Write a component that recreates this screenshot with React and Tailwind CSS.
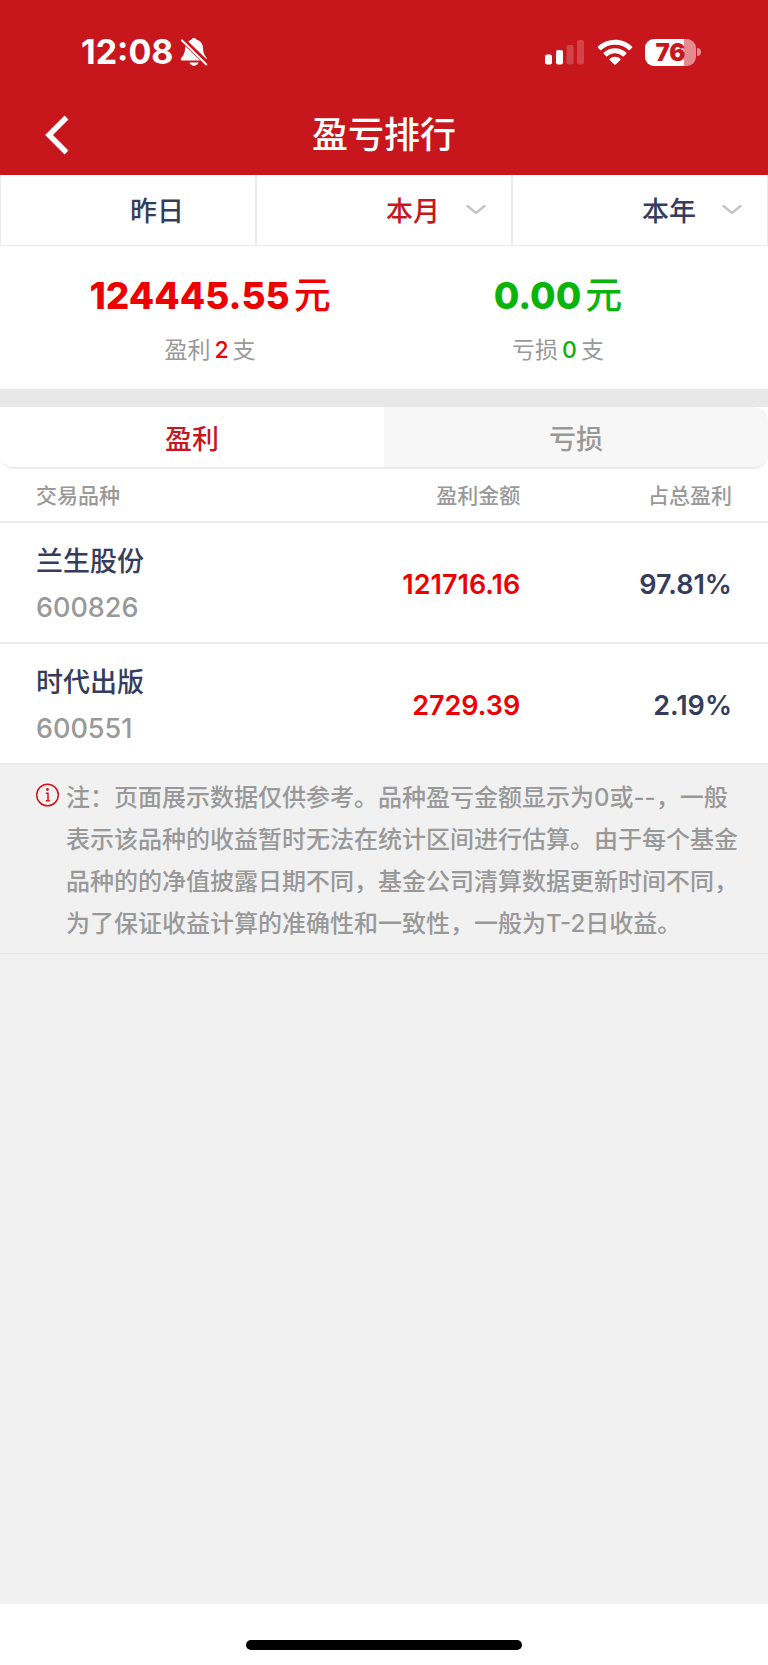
import React, { useState } from "react";

const profitList = [
  { name: "兰生股份", code: "600826", amount: "121716.16", percent: "97.81%" },
  { name: "时代出版", code: "600551", amount: "2729.39", percent: "2.19%" },
];

const StatusBar = () => {
  const battery = 76;

  return (
    <div className="flex items-center justify-between h-[100px] pt-1 pl-[81px] pr-[67px] text-white">
      <div className="flex items-center gap-1.5">
        <span className="text-[34px] leading-10 font-bold">12:08</span>
        <svg className="w-7 h-7" viewBox="0 0 28 28" fill="currentColor" aria-hidden="true">
          <path d="M8.2 3.6C9.2 2.6 10.3 2 11.4 1.7 11.8.6 12.800 0 14 0s2.200.6 2.600 1.700c3.900 1 6.200 4 6.400 8.300.1 3.100.6 5.200 1.600 6.900l1.700 2.600c.4.7.5 1.200.3 1.700L8.200 3.600z" />
          <path d="M5.300 8.200 20.200 22.600H2.300C.9 22.600.3 21.300 1.100 20.200l2-2.800c1.500-2.100 1.900-4.500 2-7.400l.2-1.800z" />
          <path d="M9.400 24.500h9.200c-.6 1.900-2.400 3.200-4.600 3.200s-4-1.300-4.600-3.200z" />
          <path d="M1.800 2.300 26.300 26.500" stroke="currentColor" strokeWidth="1.900" strokeLinecap="round" />
        </svg>
      </div>
      <div className="flex items-center">
        <svg className="w-10 h-[26px] mr-3" viewBox="0 0 40 26" fill="currentColor" aria-hidden="true">
          <rect x="0" y="15.500" width="7" height="10" rx="2" />
          <rect x="11" y="11" width="7" height="14.500" rx="2" />
          <rect x="21.500" y="6" width="7" height="19.500" rx="2" opacity="0.2" />
          <rect x="32" y="1" width="7" height="24.500" rx="2" opacity="0.2" />
        </svg>
        <svg className="w-9 h-[26px] mr-3" viewBox="0 0 36 26" fill="currentColor" aria-hidden="true">
          <path d="M18 .8c6.600 0 12.600 2.600 17 6.800.4.4.4.8.1 1.200l-2.300 2.300c-.3.3-.8.3-1.100 0A19.800 19.800 0 0 0 18 5.700 19.800 19.800 0 0 0 4.300 11.100c-.3.3-.8.3-1.100 0L.9 8.800C.6 8.400.6 8 1 7.600A24.600 24.600 0 0 1 18 .8z" />
          <path d="M18 9.300c4.300 0 8.200 1.600 11.200 4.300.4.4.4.8.1 1.200l-2.500 2.400c-.3.3-.8.3-1.100 0A11.700 11.700 0 0 0 18 14.300c-2.900 0-5.600 1.100-7.700 2.900-.3.3-.8.3-1.100 0l-2.500-2.400c-.3-.4-.3-.8.1-1.200A16.700 16.700 0 0 1 18 9.300z" />
          <path d="M18 17.800c2 0 3.900.7 5.300 1.900.4.4.4.8.1 1.200l-4.700 4.600c-.4.4-1 .4-1.400 0l-4.700-4.600c-.3-.4-.3-.8.1-1.200A8.300 8.300 0 0 1 18 17.800z" />
        </svg>
        <div className="relative flex items-center justify-center w-[51px] h-[27px]">
          <div className="absolute inset-0 rounded-[9px] bg-[#e58b8f] overflow-hidden">
            <div className="h-full bg-white" style={{ width: `${battery}%` }}></div>
          </div>
          <span className="relative pt-0.5 text-[24px] leading-8 font-black text-[#c8161d]">{battery}</span>
        </div>
        <div className="w-1 h-2 ml-px rounded-r-full bg-[#e58b8f]"></div>
      </div>
    </div>
  );
};

const Chevron = () => (
  <svg
    className="absolute right-[23px] top-1/2 -translate-y-1/2 w-6 h-3 text-[#c4c4cc] pointer-events-none"
    viewBox="0 0 24 12"
    fill="none"
    stroke="currentColor"
    strokeWidth="2.400"
    aria-hidden="true"
  >
    <path d="M3.500 2 12 9l8.500-7" strokeLinecap="round" />
  </svg>
);

const PeriodSelect = ({ label, options, active, onPick }) => (
  <div className="relative border-x border-b border-[#ebebeb]">
    <select
      aria-label={label}
      onChange={onPick}
      className={`w-full h-[70px] pt-1 pl-[58px] appearance-none bg-white text-center font-medium ${active ? "text-[#c8161d]" : "text-[#363d5c]"}`}
    >
      {options.map((option) => (
        <option key={option}>{option}</option>
      ))}
    </select>
    <Chevron />
  </div>
);

const Summary = ({ amount, label, count, color }) => (
  <div className="text-center">
    <p className={`flex items-center justify-center gap-1 text-[37px] leading-[48px] ${color}`}>
      <span className="font-extrabold">{amount}</span>
      <span className="font-medium">元</span>
    </p>
    <p className="mt-[14px] text-[23px] leading-8 text-[#999999]">
      {label}
      <span className={`mx-1 font-medium ${color}`}>{count}</span>支
    </p>
  </div>
);

const App = () => {
  const [period, setPeriod] = useState("month");
  const [tab, setTab] = useState("profit");

  return (
    <div className="min-h-screen flex flex-col bg-[#f1f1f1] text-[27px] leading-9 text-[#363d5c] font-['Inter','Noto_Sans_CJK_SC',sans-serif]">
      <header className="bg-[#c8161d]">
        <StatusBar />
        <div className="grid grid-cols-3 items-center h-[75px] px-9 pb-1.5 text-white">
          <button type="button" aria-label="返回" className="justify-self-start px-2">
            <svg className="w-7 h-10" viewBox="0 0 28 40" fill="none" stroke="currentColor" strokeWidth="5.500" aria-hidden="true">
              <path d="M22.500 2.500 5 20l17.500 17.500" />
            </svg>
          </button>
          <h1 className="text-center text-[36px] leading-10 font-medium">盈亏排行</h1>
        </div>
      </header>

      <nav className="grid grid-cols-3 bg-white">
        <button
          type="button"
          onClick={() => setPeriod("day")}
          className={`h-[71px] pt-1 pl-[58px] border-x border-b border-[#ebebeb] font-medium ${period === "day" ? "text-[#c8161d]" : ""}`}
        >
          昨日
        </button>
        <PeriodSelect
          label="月份"
          options={["本月", "上月"]}
          active={period === "month"}
          onPick={() => setPeriod("month")}
        />
        <PeriodSelect
          label="年份"
          options={["本年", "去年"]}
          active={period === "year"}
          onPick={() => setPeriod("year")}
        />
      </nav>

      <section className="grid grid-cols-2 px-9 pt-[26px] pb-[23px] bg-white">
        <Summary amount="124445.55" label="盈利" count={2} color="text-[#ee0000]" />
        <Summary amount="0.00" label="亏损" count={0} color="text-[#0ab40a]" />
      </section>

      <div className="h-[18px] bg-[#e8e8e8]"></div>

      <div className="bg-white">
        <div className="grid grid-cols-2 rounded-[14px] border-b-2 border-[#ebebeb] overflow-hidden">
          <button
            type="button"
            onClick={() => setTab("profit")}
            className={`h-[60px] pt-1.5 font-medium ${tab === "profit" ? "bg-white text-[#c8161d]" : "bg-[#f7f7f7] text-[#999999]"}`}
          >
            盈利
          </button>
          <button
            type="button"
            onClick={() => setTab("loss")}
            className={`h-[60px] pt-1.5 font-medium ${tab === "loss" ? "bg-white text-[#c8161d]" : "bg-[#f7f7f7] text-[#999999]"}`}
          >
            亏损
          </button>
        </div>

        <table className="w-full table-fixed">
          <thead>
            <tr className="h-[53px] border-b-2 border-[#ebebeb] text-[21px] text-[#999999]">
              <th className="w-[40%] pt-0.5 pl-9 text-left font-medium">交易品种</th>
              <th className="pt-0.5 pr-0.5 text-right font-medium">盈利金额</th>
              <th className="w-[32%] pt-0.5 pr-9 text-right font-medium">占总盈利</th>
            </tr>
          </thead>
          <tbody>
            {profitList.map((item) => (
              <tr key={item.code} className="h-[121px] border-b-2 border-[#ebebeb]">
                <td className="pt-1 pl-9 font-medium">
                  <p>{item.name}</p>
                  <p className="mt-[10px] text-[#999999]">{item.code}</p>
                </td>
                <td className="pt-1 pr-0.5 text-right font-semibold text-[#ee0000]">{item.amount}</td>
                <td className="pt-1 pr-9 text-right font-semibold">{item.percent}</td>
              </tr>
            ))}
          </tbody>
        </table>
      </div>

      <div className="flex items-start gap-1.5 pl-9 pr-6 pt-3 pb-2 border-b border-[#e8e8e8] text-[#999999]">
        <svg className="w-6 h-6 mt-[6px] shrink-0 text-[#d0161d]" viewBox="0 0 24 24" fill="none" stroke="currentColor" aria-hidden="true">
          <circle cx="11.500" cy="12" r="10.800" strokeWidth="1.500" />
          <circle cx="11.500" cy="6.500" r="1.400" fill="currentColor" stroke="none" />
          <path d="M9.800 10.300h2.200v7.400M9.800 17.700h4" strokeWidth="1.500" />
        </svg>
        <p className="text-[24px] leading-[42px] font-medium">
          注：页面展示数据仅供参考。品种盈亏金额显示为0或--，一般表示该品种的收益暂时无法在统计区间进行估算。由于每个基金品种的的净值披露日期不同，基金公司清算数据更新时间不同，为了保证收益计算的准确性和一致性，一般为T-2日收益。
        </p>
      </div>

      <footer className="mt-auto flex justify-center h-[61px] pt-9 bg-white">
        <div className="w-[36%] h-[10px] rounded-full bg-black"></div>
      </footer>
    </div>
  );
};

export default App;
